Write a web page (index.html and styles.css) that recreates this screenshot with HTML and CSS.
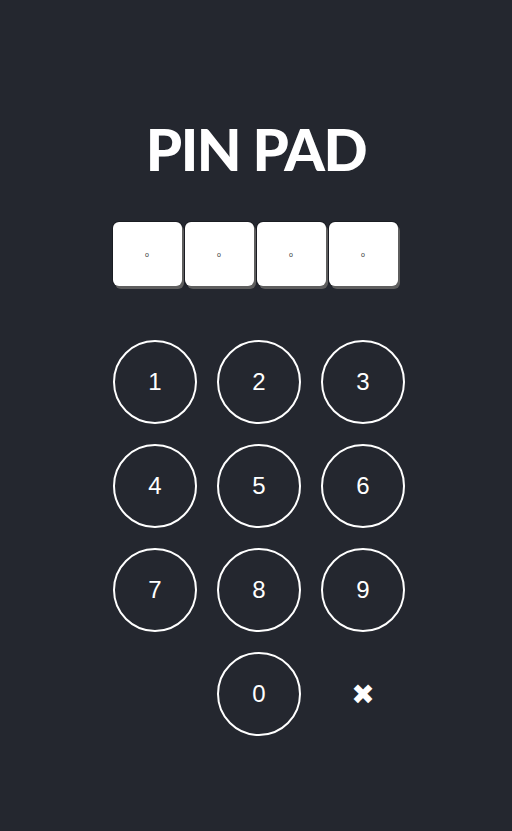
FILE: index.html
```html
<!DOCTYPE html>
<html>
<head>
<meta charset="utf-8">
<link rel="stylesheet" href="styles.css">
</head>
<body>
<main class="app">
  <h1 class="title">PIN PAD</h1>
  <div class="pins">
    <input class="pin" type="text" placeholder="o">
    <input class="pin" type="text" placeholder="o">
    <input class="pin" type="text" placeholder="o">
    <input class="pin" type="text" placeholder="o">
  </div>
  <div class="pad">
    <button class="key">1</button>
    <button class="key">2</button>
    <button class="key">3</button>
    <button class="key">4</button>
    <button class="key">5</button>
    <button class="key">6</button>
    <button class="key">7</button>
    <button class="key">8</button>
    <button class="key">9</button>
    <span class="empty"></span>
    <button class="key">0</button>
    <button class="key del">✖</button>
  </div>
</main>
</body>
</html>
```

FILE: styles.css
```css
html, body {
  margin: 0;
  padding: 0;
  background: #24272f;
  height: 100%;
}
.app {
  display: flex;
  flex-direction: column;
  align-items: center;
  padding-top: 117px;
}
.title {
  margin: 0;
  font-family: Lato, "Liberation Sans", sans-serif;
  font-weight: 900;
  font-size: 58px;
  line-height: 64px;
  color: #ffffff;
  letter-spacing: -1.5px;
}
.pins {
  display: flex;
  gap: 3px;
  margin-top: 41px;
  margin-left: -2px;
}
.pin {
  box-sizing: border-box;
  width: 69px;
  height: 64px;
  border: none;
  border-radius: 6px;
  background: #ffffff;
  box-shadow: 2px 3px 0 #5e5e5e, 0 0 0 1px #1a1c22;
  text-align: center;
  font-family: "Liberation Sans", sans-serif;
  font-size: 7px;
  padding: 0;
  outline: none;
}
.pin::placeholder {
  color: #333;
  opacity: 1;
}
.pad {
  display: grid;
  grid-template-columns: repeat(3, 84px);
  grid-auto-rows: 84px;
  gap: 20px;
  margin-top: 54px;
  margin-left: 6px;
}
.key {
  box-sizing: border-box;
  width: 84px;
  height: 84px;
  border-radius: 50%;
  border: 2px solid #ffffff;
  background: transparent;
  color: #ffffff;
  font-family: "Liberation Sans", Arial, sans-serif;
  font-size: 24px;
  padding: 0;
  display: flex;
  align-items: center;
  justify-content: center;
}
.key.del {
  border: none;
  font-family: "DejaVu Sans", sans-serif;
  font-size: 28px;
}
```
